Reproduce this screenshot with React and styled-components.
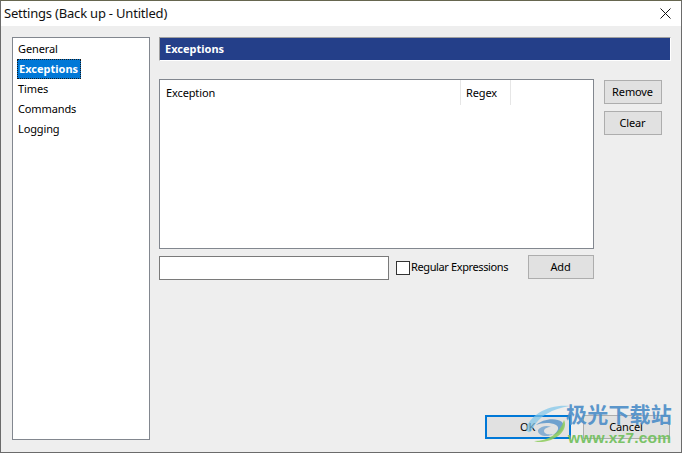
import React from 'react';
import styled, { createGlobalStyle } from 'styled-components';

const Global = createGlobalStyle`
  html, body { margin: 0; padding: 0; background: #eeeeee; }
  * { box-sizing: border-box; }
`;
const Win = styled.div`
  position: relative; width: 682px; height: 453px; overflow: hidden;
  display: flex; flex-direction: column;
  background: #eeeeee; color: #000;
  border: 1px solid #6b6b6b; border-top-color: #66664f;
  font-family: "Noto Sans", sans-serif; font-size: 11px; letter-spacing: -0.12px;
`;
const TitleBar = styled.div`
  height: 25px; flex: none; background: #fff;
  display: flex; align-items: center; justify-content: space-between;
  padding: 0 10px 0 3px;
`;
const Title = styled.div`font-size: 13px; color: #111; letter-spacing: -0.2px; margin-top: -1px;`;
const CloseIcon = styled.svg`width: 11px; height: 11px; display: block;`;
const Body = styled.div`
  flex: 1; display: flex; gap: 9px; padding: 11px 10px 12px 11px;
`;
const Nav = styled.div`
  width: 138px; flex: none; background: #fff; border: 1px solid #82878f;
  padding: 1px 0 0 4px; display: flex; flex-direction: column; align-items: flex-start;
`;
const NavItem = styled.div`
  height: 20px; line-height: 20px; padding-left: 1px;
`;
const NavItemActive = styled(NavItem)`
  width: 64px; padding-left: 1px; line-height: 18px; letter-spacing: 0;
  background: #0078d7; color: #fff; font-weight: 700;
  border: 1px dotted #1a1a1a;
`;
const Main = styled.div`flex: 1; display: flex; flex-direction: column; min-width: 0;`;
const Header = styled.div`
  height: 24px; flex: none; background: #243f89; color: #fff; font-weight: 700; font-size: 11px;
  letter-spacing: 0;
  border: 1px solid #a0a0a0; border-right-color: #fff; border-bottom-color: #fff;
  display: flex; align-items: center; padding: 0 0 2px 5px;
`;
const Content = styled.div`display: flex; gap: 10px; margin-top: 18px;`;
const Left = styled.div`width: 435px; flex: none; display: flex; flex-direction: column;`;
const Table = styled.div`
  height: 170px; background: #fff; border: 1px solid #82878f;
`;
const TableHead = styled.div`display: flex; height: 25px;`;
const Col = styled.div`
  width: ${p => p.$w}px; border-right: 1px solid #e6e6e6; padding: 2px 0 0 ${p => p.$pad}px; line-height: 22px;
`;
const InputRow = styled.div`display: flex; align-items: flex-start; margin-top: 6px;`;
const TextInput = styled.div`
  width: 230px; height: 24px; flex: none; margin-top: 1px; background: #fff; border: 1px solid #7a7a7a;
`;
const Check = styled.div`
  width: 14px; height: 14px; flex: none; margin: 6px 0 0 7px; background: #fff; border: 1px solid #333;
`;
const CheckLabel = styled.div`
  margin: 4px 0 0 1px; line-height: 16px; width: 117px; flex: none; white-space: nowrap; letter-spacing: -0.38px;
`;
const Btn = styled.div`
  width: ${p => p.$w}px; height: 24px; flex: none;
  background: #e1e1e1; border: 1px solid #adadad;
  display: flex; align-items: center; justify-content: center; color: #000; padding: 0 1px 2px 0;
`;
const Side = styled.div`display: flex; flex-direction: column; gap: 7px; margin-top: 1px;`;
const Footer = styled.div`
  margin-top: auto; display: flex; gap: 12px; justify-content: flex-end; padding: 0 1px 1px 0;
`;
const OkBtn = styled(Btn)`border: 2px solid #0078d7;`;
const Watermark = styled.div`
  position: absolute; left: 523px; top: 402px; width: 160px; height: 50px; pointer-events: none;
`;
const WmLogo = styled.svg`position: absolute; left: 0; top: 0; width: 48px; height: 44px;`;
const WmCn = styled.div`
  position: absolute; left: 42px; top: -4px; font-family: "Noto Sans CJK SC", sans-serif; font-weight: 700;
  font-size: 21px; color: #4f8fc9; letter-spacing: 0.2px; white-space: nowrap; opacity: .92; line-height: 28px;
`;
const WmEn = styled.div`
  position: absolute; left: 44px; top: 26px; font-family: "Liberation Sans", sans-serif; font-weight: 700;
  font-size: 15.5px; color: #6fbf5a; white-space: nowrap; line-height: 18px; opacity: .9; letter-spacing: .2px;
`;

export default function App() {
  return (
    <>
      <Global />
      <Win>
        <TitleBar>
          <Title>Settings (Back up - Untitled)</Title>
          <CloseIcon viewBox="0 0 11 11"><path d="M.5.5l10 10M10.5.5l-10 10" stroke="#111" fill="none" /></CloseIcon>
        </TitleBar>
        <Body>
          <Nav>
            <NavItem>General</NavItem>
            <NavItemActive>Exceptions</NavItemActive>
            <NavItem>Times</NavItem>
            <NavItem>Commands</NavItem>
            <NavItem>Logging</NavItem>
          </Nav>
          <Main>
            <Header>Exceptions</Header>
            <Content>
              <Left>
                <Table>
                  <TableHead>
                    <Col $w={301} $pad={6}>Exception</Col>
                    <Col $w={50} $pad={5}>Regex</Col>
                  </TableHead>
                </Table>
                <InputRow>
                  <TextInput />
                  <Check />
                  <CheckLabel>Regular Expressions</CheckLabel>
                  <Btn $w={66}>Add</Btn>
                </InputRow>
              </Left>
              <Side>
                <Btn $w={58}>Remove</Btn>
                <Btn $w={58}>Clear</Btn>
              </Side>
            </Content>
            <Footer>
              <OkBtn $w={86}>OK</OkBtn>
              <Btn $w={87}>Cancel</Btn>
            </Footer>
          </Main>
        </Body>
        <Watermark>
          <WmLogo viewBox="0 0 48 44">
            <path d="M2 26C6 12 24 1 46 3 28 6 15 13 9 25 7 30 4 31 2 26Z" fill="#7cc4ea" opacity=".7" />
            <path d="M12 22c6-6 20-8 26-3 4 4 0 12-9 13 5-3 7-8 3-10-6-3-15-2-20 0Z" fill="#3f86c6" opacity=".7" />
            <path d="M14 27c3-4 9-5 13-3-4 0-7 2-7 4 0 3 5 4 9 3-5 4-16 2-15-4Z" fill="#3f86c6" opacity=".55" />
            <path d="M40 17c4 8-4 20-22 22-3 0-6 0-8-1 14 0 26-7 30-21Z" fill="#8ccb5a" opacity=".85" />
          </WmLogo>
          <WmCn>极光下载站</WmCn>
          <WmEn>www.xz7.com</WmEn>
        </Watermark>
      </Win>
    </>
  );
}
